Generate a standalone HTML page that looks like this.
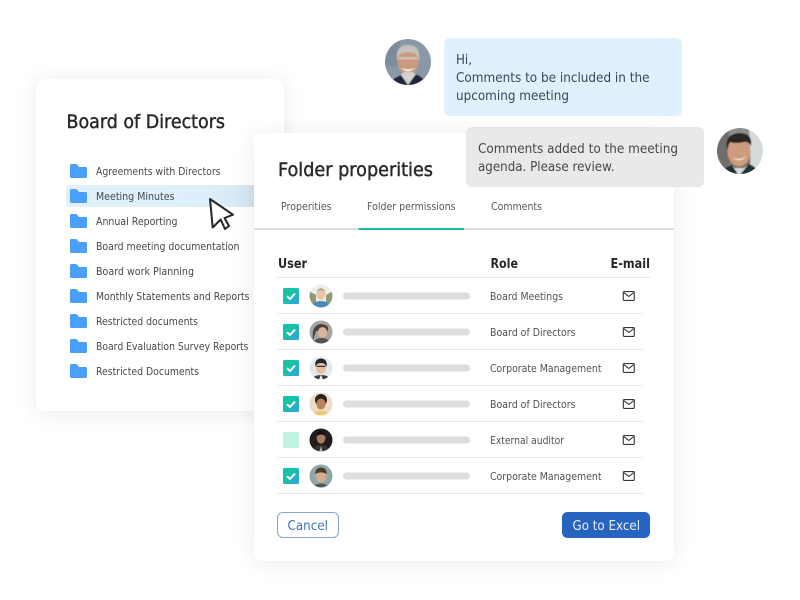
<!DOCTYPE html>
<html>
<head>
<meta charset="utf-8">
<style>
html,body{margin:0;padding:0;background:#fff;width:800px;height:600px;overflow:hidden}
svg{display:block}
text{font-family:"DejaVu Sans","Liberation Sans",sans-serif;fill:#3c4043}
.l{font-size:11px;fill:#46494d}
.r{font-size:11px;fill:#505256}
.t{font-size:10.5px;fill:#55585c}
.h{font-size:13px;font-weight:700;fill:#26282b}
.b{font-size:13.5px;fill:#3b4650}
.ti{font-size:19px;fill:#26282b;stroke:#26282b;stroke-width:.45px}
</style>
</head>
<body>
<svg width="800" height="600" viewBox="0 0 800 600" xmlns="http://www.w3.org/2000/svg">
<defs>
<filter id="s" x="-20%" y="-20%" width="140%" height="140%"><feDropShadow dx="0" dy="2" stdDeviation="10" flood-color="#000" flood-opacity=".08"/></filter>
<filter id="p" x="-5%" y="-5%" width="110%" height="110%"><feGaussianBlur stdDeviation=".55"/></filter>
<filter id="q" x="-5%" y="-5%" width="110%" height="110%"><feGaussianBlur stdDeviation=".3"/></filter>
<linearGradient id="cb" x1="0" y1="0" x2="1" y2="1"><stop offset=".4" stop-color="#15c4a5"/><stop offset="1" stop-color="#2f9fe8"/></linearGradient>
<linearGradient id="hl" x1="0" y1="0" x2="1" y2="0"><stop offset="0" stop-color="#e0f1fc"/><stop offset=".75" stop-color="#deeffa"/><stop offset="1" stop-color="#d3e4ef"/></linearGradient>
<clipPath id="c1"><circle cx="408" cy="62" r="23"/></clipPath>
<clipPath id="c2"><circle cx="740" cy="151" r="23"/></clipPath>
<clipPath id="a0"><circle cx="321" cy="296" r="11.5"/></clipPath>
<clipPath id="a1"><circle cx="321" cy="332" r="11.5"/></clipPath>
<clipPath id="a2"><circle cx="321" cy="368" r="11.5"/></clipPath>
<clipPath id="a3"><circle cx="321" cy="404" r="11.5"/></clipPath>
<clipPath id="a4"><circle cx="321" cy="440" r="11.5"/></clipPath>
<clipPath id="a5"><circle cx="321" cy="476" r="11.5"/></clipPath>
<g id="f"><path d="M0 1.5Q0 0 1.5 0H6.5L9 3H15.5Q17 3 17 4.5V12.5Q17 14 15.5 14H1.5Q0 14 0 12.5Z" fill="#4a9ffa"/></g>
<g id="m"><rect x="0.6" y="0.6" width="11" height="8.8" rx="1" fill="none" stroke="#33363a" stroke-width="1.1"/><path d="M1 1.5L6.1 5.4L11.2 1.5" fill="none" stroke="#33363a" stroke-width="1.1"/></g>
<g id="k"><rect width="16" height="16" rx="1.5" fill="url(#cb)"/><path d="M4 8.2L7 11L12 5.6" fill="none" stroke="#fff" stroke-width="2"/></g>
</defs>

<rect x="36" y="79" width="248" height="332" rx="8" fill="#fff" filter="url(#s)"/>
<text x="66.5" y="128" class="ti" textLength="158.5" lengthAdjust="spacingAndGlyphs">Board of Directors</text>
<rect x="66" y="185" width="190" height="22" rx="3" fill="url(#hl)"/>
<use href="#f" x="70" y="164"/><use href="#f" x="70" y="189"/><use href="#f" x="70" y="214"/><use href="#f" x="70" y="239"/><use href="#f" x="70" y="264"/><use href="#f" x="70" y="289"/><use href="#f" x="70" y="314"/><use href="#f" x="70" y="339"/><use href="#f" x="70" y="364"/>
<text x="96" y="175" class="l" textLength="124.5" lengthAdjust="spacingAndGlyphs">Agreements with Directors</text>
<text x="96" y="200" class="l" textLength="78.5" lengthAdjust="spacingAndGlyphs">Meeting Minutes</text>
<text x="96" y="225" class="l" textLength="81.5" lengthAdjust="spacingAndGlyphs">Annual Reporting</text>
<text x="96" y="250" class="l" textLength="143.5" lengthAdjust="spacingAndGlyphs">Board meeting documentation</text>
<text x="96" y="275" class="l" textLength="98" lengthAdjust="spacingAndGlyphs">Board work Planning</text>
<text x="96" y="300" class="l" textLength="153.5" lengthAdjust="spacingAndGlyphs">Monthly Statements and Reports</text>
<text x="96" y="325" class="l" textLength="102" lengthAdjust="spacingAndGlyphs">Restricted documents</text>
<text x="96" y="350" class="l" textLength="152.5" lengthAdjust="spacingAndGlyphs">Board Evaluation Survey Reports</text>
<text x="96" y="375" class="l" textLength="103" lengthAdjust="spacingAndGlyphs">Restricted Documents</text>

<rect x="254" y="133" width="420" height="428" rx="8" fill="#fff" filter="url(#s)"/>
<text x="278" y="176" class="ti" textLength="155" lengthAdjust="spacingAndGlyphs">Folder properities</text>
<text x="281" y="210" class="t" textLength="50.5" lengthAdjust="spacingAndGlyphs">Properities</text>
<text x="367" y="210" class="t" textLength="88.5" lengthAdjust="spacingAndGlyphs">Folder permissions</text>
<text x="491" y="210" class="t" textLength="51" lengthAdjust="spacingAndGlyphs">Comments</text>
<rect x="254" y="228" width="420" height="2" fill="#dcdcdc"/>
<rect x="358.5" y="228" width="105.5" height="2" fill="#19bd9f"/>

<text x="278" y="268" class="h" textLength="29" lengthAdjust="spacingAndGlyphs">User</text>
<text x="490.5" y="268" class="h" textLength="27.5" lengthAdjust="spacingAndGlyphs">Role</text>
<text x="610.5" y="268" class="h" textLength="39.5" lengthAdjust="spacingAndGlyphs">E-mail</text>

<g fill="#e8e8e8">
<rect x="277" y="277" width="373" height="1"/>
<rect x="277" y="313" width="366" height="1"/>
<rect x="277" y="349" width="366" height="1"/>
<rect x="277" y="385" width="366" height="1"/>
<rect x="277" y="421" width="366" height="1"/>
<rect x="277" y="457" width="366" height="1"/>
<rect x="277" y="493" width="366" height="1"/>
</g>

<use href="#k" x="283" y="288"/><use href="#k" x="283" y="324"/><use href="#k" x="283" y="360"/><use href="#k" x="283" y="396"/>
<rect x="283" y="432" width="16" height="16" fill="#bdf3e0"/>
<use href="#k" x="283" y="468"/>

<g fill="#dedede">
<rect x="343" y="292.5" width="127" height="7" rx="3.5"/>
<rect x="343" y="328.5" width="127" height="7" rx="3.5"/>
<rect x="343" y="364.5" width="127" height="7" rx="3.5"/>
<rect x="343" y="400.5" width="127" height="7" rx="3.5"/>
<rect x="343" y="436.5" width="127" height="7" rx="3.5"/>
<rect x="343" y="472.5" width="127" height="7" rx="3.5"/>
</g>

<!-- row avatars -->
<g clip-path="url(#a0)"><g filter="url(#q)"><rect x="309" y="284" width="24" height="24" fill="#eceee9"/><path d="M309 291L316 295V308H309ZM333 291L326 295V308H333Z" fill="#8f9a78"/><ellipse cx="321" cy="294" rx="4.6" ry="5.8" fill="#eac4a8"/><path d="M316.5 291Q321 286 325.5 291Q321 289 316.5 291Z" fill="#a9956f"/><path d="M311 308Q313 301 321 301Q329 301 331 308Z" fill="#4f86b8"/></g></g>
<g clip-path="url(#a1)"><g filter="url(#q)"><rect x="309" y="320" width="24" height="24" fill="#a5a5a3"/><path d="M313 340Q311 325 321 324Q331 325 327 332L316 331Z" fill="#4a423c"/><ellipse cx="322.5" cy="332.5" rx="4.6" ry="5.4" fill="#dcb59c"/><path d="M312 345Q314 338 322 338Q329 338 331 345Z" fill="#57534f"/></g></g>
<g clip-path="url(#a2)"><g filter="url(#q)"><rect x="309" y="356" width="24" height="24" fill="#e6e9ea"/><ellipse cx="321" cy="368" rx="5" ry="6" fill="#e6bfa3"/><path d="M315.5 367Q314 359 321 358.5Q328 359 326.5 367Q325 362.5 321 363Q317 362.5 315.5 367Z" fill="#24262a"/><rect x="316.5" y="365.8" width="9" height="1.2" fill="#333"/><path d="M311 381Q313 375 321 375Q329 375 331 381Z" fill="#3a3d40"/><path d="M318.5 381L321 374.5L323.5 381Z" fill="#f2f2f2"/></g></g>
<g clip-path="url(#a3)"><g filter="url(#q)"><rect x="309" y="392" width="24" height="24" fill="#ecdcc6"/><ellipse cx="321" cy="400" rx="6" ry="6" fill="#2a211d"/><ellipse cx="321" cy="404" rx="4.6" ry="5.4" fill="#b9835a"/><path d="M312 417Q314 410.5 321 410.5Q328 410.5 330 417Z" fill="#ecc772"/></g></g>
<g clip-path="url(#a4)"><g filter="url(#q)"><rect x="309" y="428" width="24" height="24" fill="#231c1a"/><ellipse cx="321" cy="438" rx="4.4" ry="5.6" fill="#a87a62"/><path d="M316.6 436Q317 431 321 431Q325 431 325.4 436Q321 433 316.6 436Z" fill="#15110f"/><path d="M312 453Q314 445 321 445Q328 445 330 453Z" fill="#3b3431"/><path d="M319 453L321 446L323 453Z" fill="#b6b0aa"/></g></g>
<g clip-path="url(#a5)"><g filter="url(#q)"><rect x="309" y="464" width="24" height="24" fill="#8fa7a8"/><ellipse cx="321" cy="476" rx="5.5" ry="6.4" fill="#d9ab8e"/><path d="M315.4 474Q315 468 321 467.5Q327 468 326.6 474Q321 470.5 315.4 474Z" fill="#4a3a2c"/><path d="M312 489Q314 483.5 321 483.5Q328 483.5 330 489Z" fill="#4c5a58"/></g></g>

<text x="490" y="300" class="r" textLength="73" lengthAdjust="spacingAndGlyphs">Board Meetings</text>
<text x="490" y="336" class="r" textLength="85.5" lengthAdjust="spacingAndGlyphs">Board of Directors</text>
<text x="490" y="372" class="r" textLength="111.5" lengthAdjust="spacingAndGlyphs">Corporate Management</text>
<text x="490" y="408" class="r" textLength="85.5" lengthAdjust="spacingAndGlyphs">Board of Directors</text>
<text x="490" y="444" class="r" textLength="74" lengthAdjust="spacingAndGlyphs">External auditor</text>
<text x="490" y="480" class="r" textLength="111.5" lengthAdjust="spacingAndGlyphs">Corporate Management</text>

<use href="#m" x="622.7" y="291"/><use href="#m" x="622.7" y="327"/><use href="#m" x="622.7" y="363"/><use href="#m" x="622.7" y="399"/><use href="#m" x="622.7" y="435"/><use href="#m" x="622.7" y="471"/>

<rect x="277.5" y="512.5" width="61" height="25" rx="5.5" fill="#fff" stroke="#86a7d2" stroke-width="1"/>
<text x="287.5" y="530" style="font-size:13.5px;fill:#3f72b5" textLength="40.5" lengthAdjust="spacingAndGlyphs">Cancel</text>
<rect x="562" y="512" width="88" height="26" rx="5.5" fill="#2664bf"/>
<text x="572.5" y="530" style="font-size:13.5px;fill:#e9f0fa" textLength="67.5" lengthAdjust="spacingAndGlyphs">Go to Excel</text>

<rect x="444" y="38" width="238" height="78" rx="6" fill="#dff1fc"/>
<text x="456" y="64" class="b" textLength="16" lengthAdjust="spacingAndGlyphs">Hi,</text>
<text x="456" y="82" class="b" textLength="193.5" lengthAdjust="spacingAndGlyphs">Comments to be included in the</text>
<text x="456" y="100" class="b" textLength="113" lengthAdjust="spacingAndGlyphs">upcoming meeting</text>

<rect x="466" y="127" width="238" height="60" rx="6" fill="#e9e9e9"/>
<text x="478" y="153" class="b" style="fill:#44474a" textLength="200" lengthAdjust="spacingAndGlyphs">Comments added to the meeting</text>
<text x="478" y="171" class="b" style="fill:#44474a" textLength="136.5" lengthAdjust="spacingAndGlyphs">agenda. Please review.</text>

<!-- top avatars -->
<g clip-path="url(#c1)"><g filter="url(#p)">
<rect x="383" y="37" width="50" height="50" fill="#8a99a7"/>
<path d="M383 37H400V66H383Z" fill="#7c8c9b"/>
<path d="M397 60Q395 45 408 45Q421 45 419 60Z" fill="#c2c1bc"/>
<ellipse cx="408" cy="62" rx="10.5" ry="13" fill="#c99a80"/>
<path d="M397.5 56Q400 49 408 49Q416 49 418.5 56Q414 52 408 52Q402 52 397.5 56Z" fill="#c8c7c2"/>
<rect x="399" y="57.5" width="18" height="1.6" fill="#e0dcd6" opacity=".8"/>
<path d="M401 68Q408 74 415 68Q409 71 401 68Z" fill="#fff"/>
<path d="M387 88Q391 78 402 75L408 80L415 74Q425 77 429 88Z" fill="#1c2740"/>
<path d="M401 75L408 85L416 74L412 72H404Z" fill="#d4d3cf"/>
</g></g>
<g clip-path="url(#c2)"><g filter="url(#p)">
<rect x="715" y="126" width="50" height="50" fill="#8f8d8b"/>
<path d="M749 126H765V176H751Z" fill="#d6dadb"/>
<path d="M715 126H729V176H715Z" fill="#6f6d6b"/>
<ellipse cx="739" cy="152" rx="11.5" ry="14" fill="#cf9b7d"/>
<path d="M727 150Q724 134 739 133Q753 133 751 146Q749 141 744 142Q735 144 730 142Q728 145 727 150Z" fill="#2b2624"/>
<path d="M732 157Q739 164 747 156Q742 159 738 159Q735 159 732 157Z" fill="#f5f2ee"/>
<path d="M728 156Q731 167 739 167Q748 167 750 155Q750 170 739 170Q729 170 728 156Z" fill="#7a5f50"/>
<path d="M719 177Q724 167 732 165L740 172L749 164Q757 167 762 177Z" fill="#1f3333"/>
<path d="M732 165L739 176L748 165L744 168H735Z" fill="#d8dbdb"/>
</g></g>

<path d="M210 199L233 214.7L224.5 218L229 226L225 229L220.7 219.5L212.7 227.5Z" fill="#fff" stroke="#24262a" stroke-width="2" stroke-linejoin="round"/>
</svg>
</body>
</html>
